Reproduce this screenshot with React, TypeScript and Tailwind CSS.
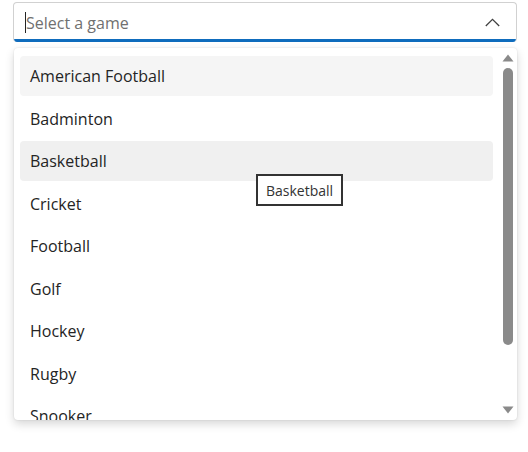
const games = [
  "American Football",
  "Badminton",
  "Basketball",
  "Cricket",
  "Football",
  "Golf",
  "Hockey",
  "Rugby",
  "Snooker",
];

const App = () => {
  return (
    <div className="w-[528px] h-[452px] bg-white font-['Segoe_UI','Open_Sans',sans-serif] text-[#242424]">
      <div className="pl-[13px] pr-[11px] pt-[2px]">
        {/* Combobox input */}
        <div className="h-[40px] rounded-[4px] border border-[#d1d1d1] border-b-0 overflow-hidden flex flex-col">
          <div className="flex-1 flex items-center pt-[3px] pl-[11px] pr-[16px]">
            <span className="w-px h-[21px] bg-[#242424]" />
            <span className="text-[16px] text-[#707070] flex-1">Select a game</span>
            <svg width="15" height="9" viewBox="0 0 15 9" fill="none">
              <path d="M0.8 8 L7.5 1.3 L14.2 8" stroke="#424242" strokeWidth="1.3" />
            </svg>
          </div>
          <div className="h-[3px] bg-[#0f6cbd]" />
        </div>

        {/* Listbox */}
        <div className="relative mt-[6px] ml-px h-[372px] rounded-[4px] bg-white shadow-[0_4px_10px_rgba(0,0,0,0.16),0_0_2px_rgba(0,0,0,0.12)] overflow-hidden flex">
          <div className="flex-1 pt-[8px] pl-[6px] pr-[8px] flex flex-col gap-[2.5px]">
            {games.map((g, i) => (
              <div
                key={g}
                className={`h-[40px] shrink-0 rounded-[4px] pl-[10px] flex items-center text-[16px] ${
                  i === 0 ? "bg-[#f5f5f5]" : i === 2 ? "bg-[#f0f0f0]" : ""
                }`}
              >
                {g}
              </div>
            ))}
          </div>

          {/* Scrollbar */}
          <div className="w-[16px] shrink-0 flex flex-col items-center pt-[6px] pb-[6px] pr-[3px]">
            <svg width="12" height="8" viewBox="0 0 12 8">
              <path d="M6 0.5 L11.5 7.5 L0.5 7.5 Z" fill="#8a8a8a" />
            </svg>
            <div className="mt-[6px] w-[10px] h-[277px] rounded-full bg-[#8a8a8a]" />
            <div className="flex-1" />
            <svg width="12" height="8" viewBox="0 0 12 8">
              <path d="M0.5 0.5 L11.5 0.5 L6 7.5 Z" fill="#8a8a8a" />
            </svg>
          </div>

          {/* Tooltip */}
          <div className="absolute left-[242px] top-[126px] h-[32px] px-[8px] flex items-center border-2 border-[#333] bg-white text-[14px] text-[#333]">
            Basketball
          </div>
        </div>
      </div>
    </div>
  );
};

export default App;
